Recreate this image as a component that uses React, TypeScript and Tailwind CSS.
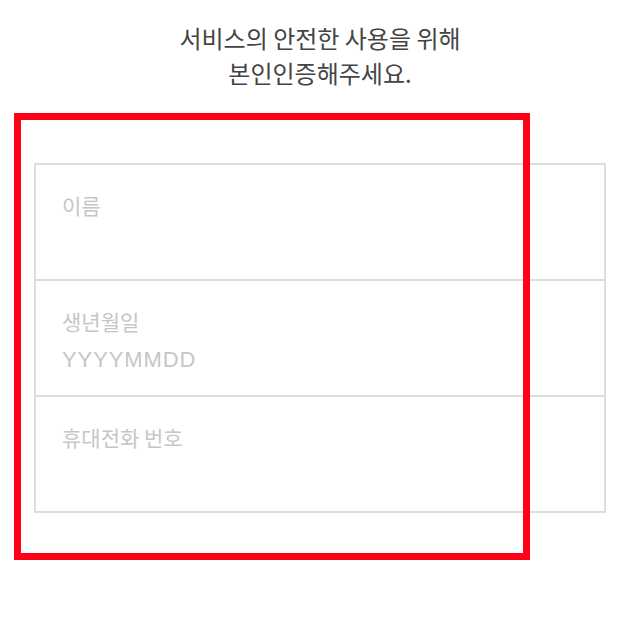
const fields = [
  { label: "이름", placeholder: "" },
  { label: "생년월일", placeholder: "YYYYMMDD" },
  { label: "휴대전화 번호", placeholder: "" },
];

export default function App() {
  return (
    <div className="relative min-h-[628px] w-[640px] bg-white font-['Noto_Sans_CJK_KR',sans-serif]">
      <div className="pt-[20px] text-center text-[24px] leading-[35px] text-[#444444]">
        <p>서비스의 안전한 사용을 위해</p>
        <p>본인인증해주세요.</p>
      </div>

      <form className="ml-[34px] mt-[73px] w-[572px] border-2 border-[#dddddd] bg-white">
        {fields.map((field, i) => (
          <div
            key={field.label}
            className={`flex flex-col pl-[26px] pt-[28px] ${i < fields.length - 1 ? "h-[116px] border-b-2 border-[#dddddd]" : "h-[114px]"}`}
          >
            <label className="text-[21px] leading-[24px] text-[#c6c6c6]">{field.label}</label>
            {field.placeholder && (
              <input
                type="text"
                placeholder={field.placeholder}
                className="mt-[14px] h-[26px] w-[300px] bg-transparent font-['Liberation_Sans',Arial,sans-serif] text-[22px] leading-[26px] tracking-[0.9px] text-[#444] outline-none placeholder:text-[#c6c6c6]"
              />
            )}
          </div>
        ))}
      </form>

      {/* annotation frame */}
      <div className="pointer-events-none absolute left-[14px] top-[113px] h-[447px] w-[516px] border-[7px] border-[#ff0016]" />
    </div>
  );
}
